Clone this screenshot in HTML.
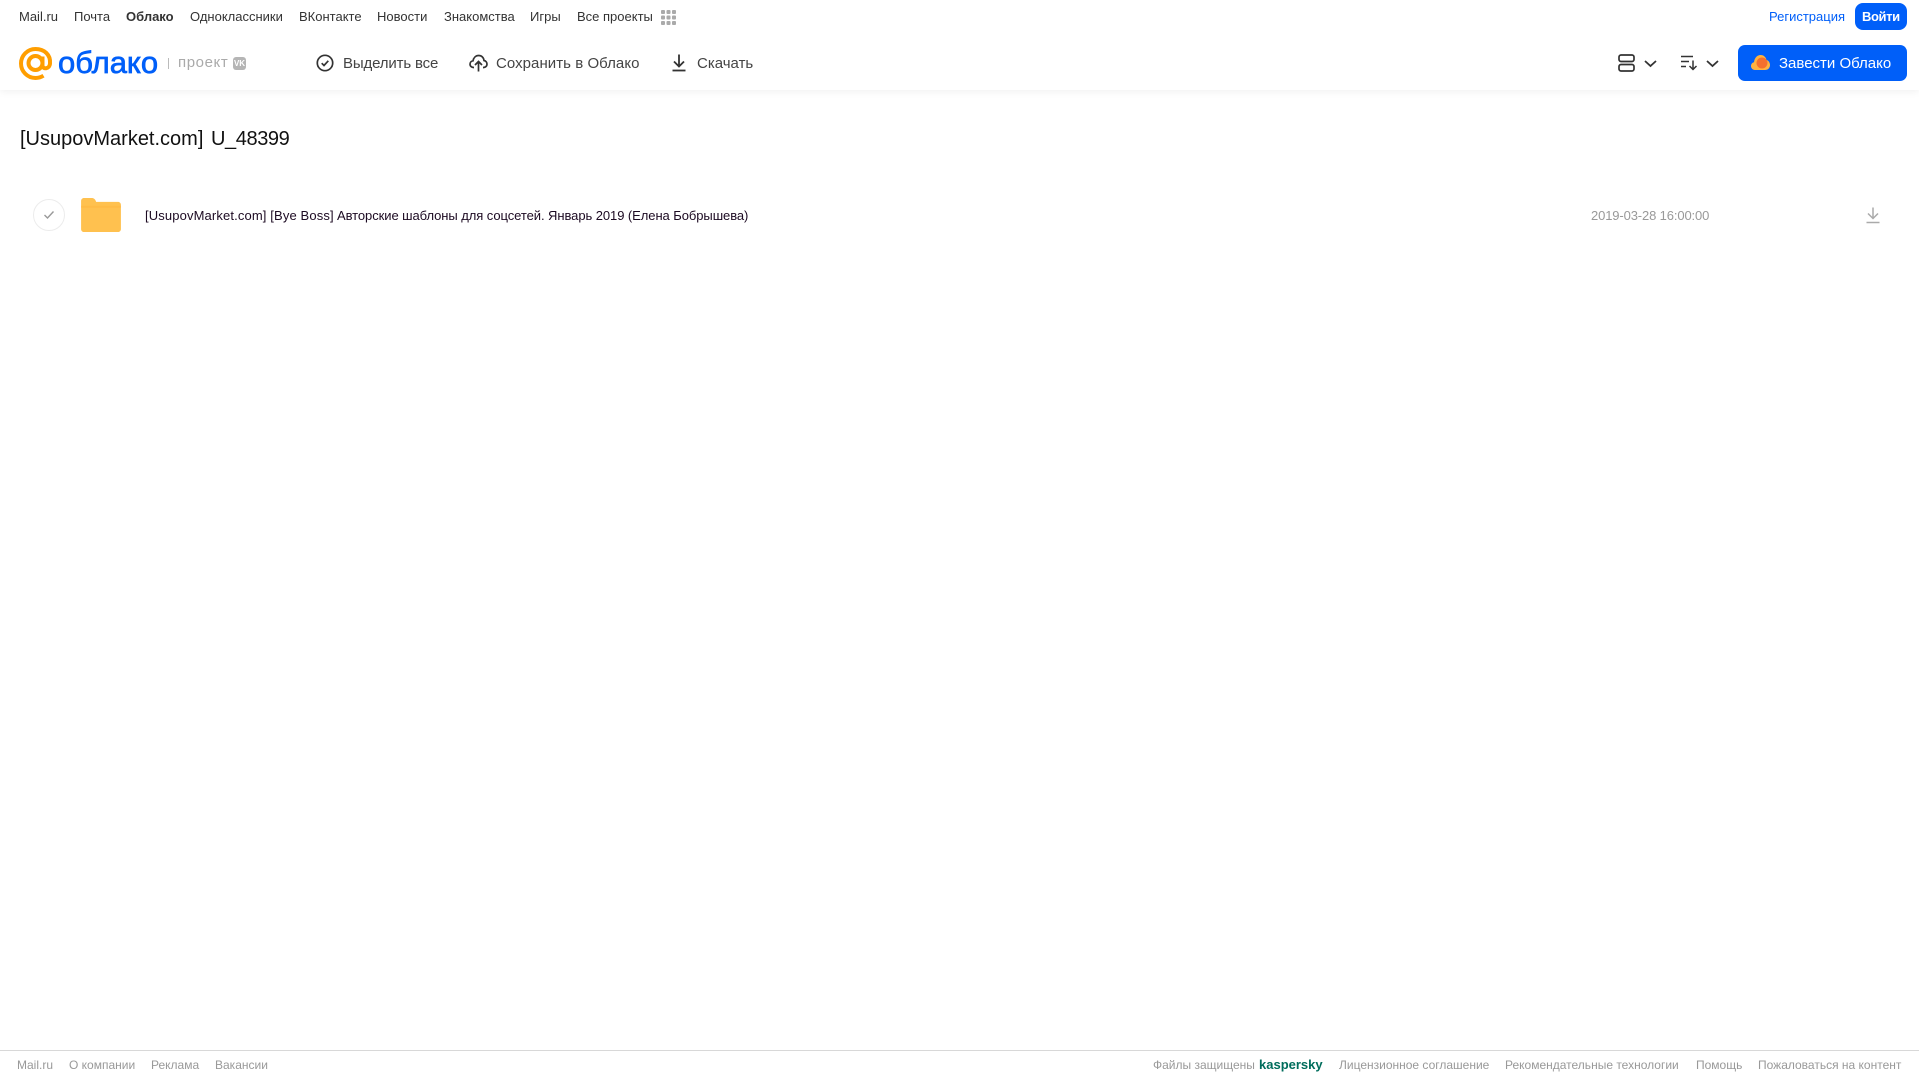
<!DOCTYPE html>
<html lang="ru"><head><meta charset="utf-8"><title>Облако</title>
<style>
html,body{margin:0;padding:0;background:#fff;width:1919px;height:1079px;overflow:hidden}
body{position:relative;font-family:"Liberation Sans",sans-serif}
.t{position:absolute;white-space:nowrap;line-height:20px}
svg{position:absolute;overflow:visible}
.n{top:7px;font-size:13px;color:#333}
.tb{top:54px;font-size:15px;color:#444;letter-spacing:0}
.f{top:1055px;font-size:12px;color:#999}
#hd{position:absolute;left:0;top:0;width:1919px;height:90px;background:#fff;box-shadow:0 1px 8px rgba(0,0,0,.07)}
</style></head><body>
<div id="hd"></div>
<span class="t n" style="left:19px">Mail.ru</span>
<span class="t n" style="left:74px">Почта</span>
<span class="t n" style="left:126px;font-weight:bold">Облако</span>
<span class="t n" style="left:190px">Одноклассники</span>
<span class="t n" style="left:299px">ВКонтакте</span>
<span class="t n" style="left:377px">Новости</span>
<span class="t n" style="left:444px">Знакомства</span>
<span class="t n" style="left:530px">Игры</span>
<span class="t n" style="left:577px">Все проекты</span>
<svg style="left:661px;top:10px" width="15" height="15" fill="#aaa"><rect x="0" y="0" width="4" height="4" rx="1"/><rect x="5.5" y="0" width="4" height="4" rx="1"/><rect x="11" y="0" width="4" height="4" rx="1"/><rect x="0" y="5.5" width="4" height="4" rx="1"/><rect x="5.5" y="5.5" width="4" height="4" rx="1"/><rect x="11" y="5.5" width="4" height="4" rx="1"/><rect x="0" y="11" width="4" height="4" rx="1"/><rect x="5.5" y="11" width="4" height="4" rx="1"/><rect x="11" y="11" width="4" height="4" rx="1"/></svg>
<span class="t n" style="left:1769px;color:#005ff9">Регистрация</span>
<div style="position:absolute;left:1855px;top:3px;width:52px;height:27px;border-radius:8px;background:#005ff9"></div>
<span class="t n" style="left:1862px;color:#fff;font-weight:bold;top:7px;letter-spacing:-.4px">Войти</span>

<svg style="left:19px;top:47px" width="34" height="33" viewBox="0 0 34 33" fill="none" stroke="#ff9e00" stroke-width="4"><circle cx="16.5" cy="16" r="7"/><path d="M23.5 9.500V18.500C23.500 22.500 30.500 22.500 31 16.500C31.800 7.500 25 2 16.500 2C8.500 2 2 8.500 2 16.500C2 24.500 8.500 31 16.500 31C19.500 31 22 30.200 24.500 28.700"/></svg>
<span class="t" style="left:58px;top:47px;font-size:31px;line-height:32px;color:#005ff9;-webkit-text-stroke:.7px #005ff9">облако</span>
<div style="position:absolute;left:168px;top:58px;width:1px;height:11px;background:#bbb"></div>
<span class="t" style="left:178px;top:53px;font-size:15px;color:#aaa;letter-spacing:.6px">проект</span>
<div style="position:absolute;left:233px;top:57px;width:13px;height:13px;border-radius:3px;background:#b5b5b5;color:#fff;font-size:8px;line-height:13px;text-align:center;font-weight:bold">VK</div>

<svg style="left:316px;top:54px" width="18" height="18" fill="none" stroke="#333" stroke-width="1.7"><circle cx="9" cy="9" r="7.7"/><path d="M5.7 9.200L8 11.500L12.300 6.800"/></svg>
<span class="t tb" style="left:343px;letter-spacing:-.15px">Выделить все</span>
<svg style="left:469px;top:54px" width="19" height="18" fill="none" stroke="#333" stroke-width="1.7"><path d="M5 13.500H4.500C2.500 13.500 1 12 1 10.200C1 8.400 2.300 7 4 6.800C4.600 3.600 6.800 1.500 9.700 1.500C12.500 1.500 14.700 3.600 15 6.500C16.800 6.800 18 8.300 18 10.100C18 12 16.500 13.500 14.600 13.500H14"/><path d="M9.500 17.500V8M6 11L9.500 7.500L13 11"/></svg>
<span class="t tb" style="left:496px;letter-spacing:.05px">Сохранить в Облако</span>
<svg style="left:671px;top:54px" width="16" height="18" fill="none" stroke="#333" stroke-width="1.8"><path d="M8 0.500V12M3 7.500L8 12.500L13 7.500"/><path d="M1.500 16.500H14.500"/></svg>
<span class="t tb" style="left:697px">Скачать</span>

<svg style="left:1618px;top:54px" width="17" height="18" fill="none" stroke="#333" stroke-width="1.7"><rect x="1" y="1" width="15" height="6.500" rx="2"/><rect x="1" y="10.500" width="15" height="6.500" rx="2"/></svg>
<svg style="left:1644px;top:60px" width="13" height="7" fill="none" stroke="#333" stroke-width="1.800"><path d="M1 1L6.500 6L12 1"/></svg>
<svg style="left:1681px;top:55px" width="17" height="16" fill="none" stroke="#333" stroke-width="1.500"><path d="M0 1.500H12M0 6.500H8M0 11.500H5"/><path d="M12 5.500V14.500M8.500 11L12 14.500L15.500 11"/></svg>
<svg style="left:1706px;top:60px" width="13" height="7" fill="none" stroke="#333" stroke-width="1.800"><path d="M1 1L6.500 6L12 1"/></svg>
<div style="position:absolute;left:1738px;top:45px;width:169px;height:36px;border-radius:7px;background:#005ff9"></div>
<svg style="left:1751px;top:54px" width="19" height="17"><path d="M4 16C1.500 16 0 14 0 12C0 10 1.500 8.500 3 8.300C3.500 3.500 6.500 1 9.500 1C13 1 15 3.500 15.500 6C17.500 6.500 19 8.500 19 11C19 14 17 16 14 16Z" fill="#ffb340"/><circle cx="11" cy="9" r="5.500" fill="#f4702e"/></svg>
<span class="t tb" style="left:1779px;color:#fff">Завести Облако</span>

<span class="t" style="left:20px;top:127px;font-size:20px;line-height:24px;color:#111">[UsupovMarket.com]</span>
<span class="t" style="left:211px;top:127px;font-size:20px;line-height:24px;color:#111;letter-spacing:-.4px">U_48399</span>

<div style="position:absolute;left:33px;top:199px;width:30px;height:30px;border:1px solid #ececec;border-radius:50%"></div>
<svg style="left:43px;top:210px" width="12" height="10" fill="none" stroke="#999" stroke-width="1.400"><path d="M1.500 5L4.500 8L10.500 1.500"/></svg>
<svg style="left:81px;top:198px" width="40" height="34" viewBox="0 0 41 35"><path d="M0 3C0 1.300 1.300 0 3 0H11C13 0 14.500 1 15.500 4H38C39.700 4 41 5.300 41 7V32C41 33.700 39.700 35 38 35H3C1.300 35 0 33.700 0 32Z" fill="#ffc14f"/><rect x="0" y="8" width="41" height="2" fill="#ffb83f" opacity=".6"/></svg>
<span class="t" style="left:145px;top:206px;font-size:13px;color:#1c0a22;letter-spacing:.13px">[UsupovMarket.com] [Bye Boss]</span>
<span class="t" style="left:337px;top:206px;font-size:13px;color:#1c0a22;letter-spacing:-.07px">Авторские шаблоны для соцсетей. Январь 2019 (Елена Бобрышева)</span>
<span class="t" style="left:1591px;top:206px;font-size:13px;color:#999;letter-spacing:-.13px">2019-03-28 16:00:00</span>
<svg style="left:1866px;top:207px" width="14" height="17" fill="none" stroke="#aaa" stroke-width="1.500"><path d="M7 0.500V11M2 6.500L7 11.500L12 6.500"/><path d="M0.500 15.500H13.500"/></svg>

<div style="position:absolute;left:0;top:1050px;width:1919px;height:1px;background:#d8d8d8"></div>
<span class="t f" style="left:17px">Mail.ru</span>
<span class="t f" style="left:69px">О компании</span>
<span class="t f" style="left:151px">Реклама</span>
<span class="t f" style="left:215px">Вакансии</span>
<span class="t f" style="left:1153px">Файлы защищены</span>
<span class="t f" style="left:1259px;color:#006d5c;font-weight:bold;font-size:13px">kaspersky</span>
<span class="t f" style="left:1339px">Лицензионное соглашение</span>
<span class="t f" style="left:1505px">Рекомендательные технологии</span>
<span class="t f" style="left:1696px">Помощь</span>
<span class="t f" style="left:1758px">Пожаловаться на контент</span>
</body></html>
